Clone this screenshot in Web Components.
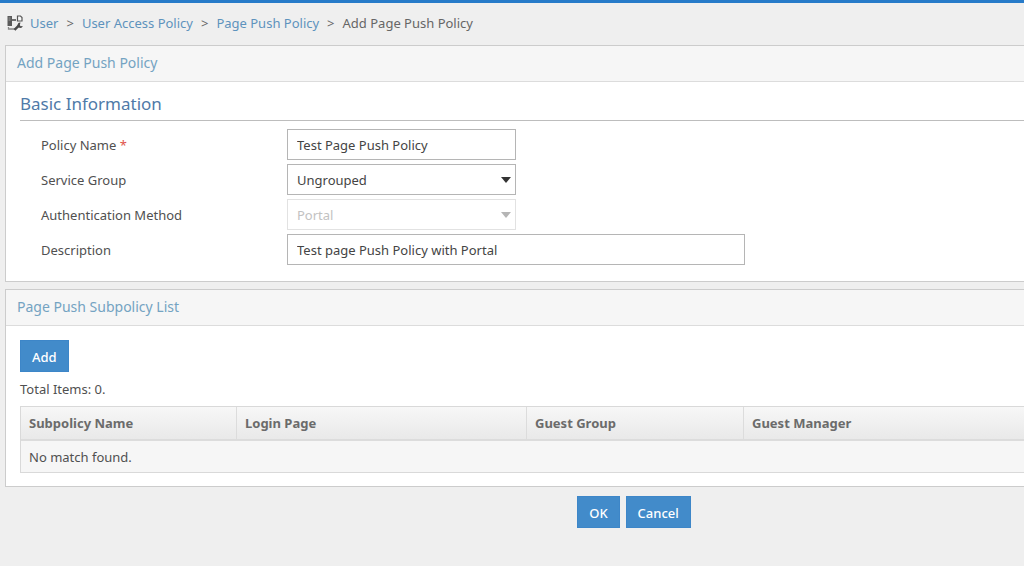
<!DOCTYPE html>
<html lang="en">
<head>
<meta charset="utf-8">
<title>Add Page Push Policy</title>
<style>
  body { margin: 0; background: #efefef; overflow-x: hidden; }
</style>
</head>
<body>
<policy-page></policy-page>

<template id="policy-page">
  <style>
    :host { display: block; min-height: 100vh; box-sizing: border-box; border-top: 3px solid #277bc9;
      background: #efefef; color: #505050; font: 13px/20px "Noto Sans", "Open Sans", sans-serif; }
    main { display: flex; flex-direction: column; gap: 7px; padding-left: 5px; }
    h2 { margin: 0; padding: 0 0 4px; border-bottom: 1px solid #bdbdbd; color: #4f7aa8;
      font-size: 17px; line-height: 24px; font-weight: 400; }
    form { display: flex; flex-direction: column; gap: 4px; padding: 8px 0 0 21px; }
    .info { padding: 10px 0 16px 14px; }
    .list { padding: 14px 0 13px 14px; }
    .total { margin: 0; padding: 7px 0; }
    footer { display: flex; justify-content: center; gap: 6px; padding: 9px 0 0 244px; }
  </style>
  <crumb-bar></crumb-bar>
  <main>
    <app-panel>
      <span slot="title">Add Page Push Policy</span>
      <div class="info">
        <h2>Basic Information</h2>
        <form>
          <text-field label="Policy Name" value="Test Page Push Policy" required></text-field>
          <select-field label="Service Group" value="Ungrouped"></select-field>
          <select-field label="Authentication Method" value="Portal" disabled></select-field>
          <text-field label="Description" value="Test page Push Policy with Portal" wide></text-field>
        </form>
      </div>
    </app-panel>
    <app-panel>
      <span slot="title">Page Push Subpolicy List</span>
      <div class="list">
        <action-button>Add</action-button>
        <p class="total">Total Items: 0.</p>
        <subpolicy-table></subpolicy-table>
      </div>
    </app-panel>
  </main>
  <footer>
    <action-button>OK</action-button>
    <action-button>Cancel</action-button>
  </footer>
</template>

<template id="crumb-bar">
  <style>
    :host { display: block; padding: 10px 7px 12px; }
    nav, ol { display: flex; align-items: center; }
    nav { gap: 7px; }
    ol { margin: 0; padding: 0; list-style: none; color: #666; }
    li + li::before { content: ">"; padding: 0 8px; color: #666; }
    a { color: #5e93bd; text-decoration: none; }
    svg { display: block; flex: none; }
  </style>
  <nav aria-label="Breadcrumb">
    <svg width="16" height="16" viewBox="0 0 16 16" aria-hidden="true">
      <path d="M.5 1H5v10H.5z" fill="#5a5a5a"/>
      <path d="M1.500 3h2M1.500 5h2" stroke="#999" fill="none"/>
      <path d="M5 5h4" stroke="#444" stroke-width="1.500" fill="none"/>
      <path d="M1.500 12v2H8" stroke="#888" stroke-width="1.300" fill="none"/>
      <path d="M10.500 1h3L15 2.500V6h-4.500z" fill="#f8f8f8" stroke="#555" stroke-width="1.200"/>
      <path d="M7.500 14.800l4.500-4.500" stroke="#4a4a4a" stroke-width="2.400" fill="none"/>
      <path d="M13.500 7.500a2.700 2.700 0 1 0 2.300 3.500l-2.200.3-.8-1.300z" fill="#4a4a4a"/>
    </svg>
    <ol>
      <li><a href="#user">User</a></li>
      <li><a href="#access">User Access Policy</a></li>
      <li><a href="#push">Page Push Policy</a></li>
      <li aria-current="page">Add Page Push Policy</li>
    </ol>
  </nav>
</template>

<template id="app-panel">
  <style>
    :host { display: block; border: 1px solid #ccc; border-right: 0; background: #fff; }
    header { padding: 7px 11px 8px; background: #f6f6f6; border-bottom: 1px solid #dcdcdc;
      color: #74a3c2; font-size: 14px; line-height: 20px; }
  </style>
  <header><slot name="title"></slot></header>
  <slot></slot>
</template>

<template id="text-field">
  <style>
    :host { display: flex; align-items: center; }
    label { flex: 0 0 246px; }
    .star { color: #e0524a; }
    input { box-sizing: border-box; width: 229px; height: 31px; margin: 0; padding: 0 9px; border: 1px solid #b5b5b5;
      border-radius: 0; background: #fff; color: #444; font: inherit; }
    :host([wide]) input { width: 458px; }
  </style>
  <label for="control"></label>
  <input id="control" type="text">
</template>

<template id="select-field">
  <style>
    :host { display: flex; align-items: center; }
    label { flex: 0 0 246px; }
    .box { display: grid; width: 229px; align-items: center; }
    select, svg { grid-area: 1 / 1; }
    select { box-sizing: border-box; width: 100%; height: 31px; margin: 0; padding: 0 9px; border: 1px solid #b5b5b5;
      border-radius: 0; appearance: none; background: #fff; color: #444; font: inherit; opacity: 1; }
    svg { justify-self: end; margin-right: 5px; color: #333; pointer-events: none; z-index: 1; }
    select:disabled { border-color: #e2e2e2; color: #c2c2c2; }
    select:disabled + svg { color: #b5b5b5; }
  </style>
  <label for="control"></label>
  <div class="box">
    <select id="control"></select>
    <svg width="10" height="6" viewBox="0 0 10 6" aria-hidden="true"><path d="M0 0h10L5 6z" fill="currentColor"/></svg>
  </div>
</template>

<template id="action-button">
  <style>
    :host { display: block; }
    button { display: block; height: 32px; margin: 0; padding: 2px 11px 0; border: 1px solid #3d86c8; border-radius: 0;
      background: #428bca; color: #fff; font: inherit; font-weight: 500; cursor: pointer; }
  </style>
  <button type="button"><slot></slot></button>
</template>

<template id="subpolicy-table">
  <style>
    :host { display: block; }
    table { width: 100%; table-layout: fixed; border-spacing: 0; border: 1px solid #d9d9d9; border-right: 0; }
    th { height: 32px; padding: 0 8px; text-align: left; color: #6b6b6b; font-weight: 700;
      background: linear-gradient(#f7f7f7, #e9e9e9); border-bottom: 2px solid #dcdcdc; }
    th + th { border-left: 1px solid #dcdcdc; }
    td { height: 31px; padding: 0 8px; background: #f6f6f6; }
    .name { width: 199px; }
    .login { width: 273px; }
    .group { width: 200px; }
  </style>
  <table>
    <thead>
      <tr><th class="name" scope="col">Subpolicy Name</th><th class="login" scope="col">Login Page</th><th class="group" scope="col">Guest Group</th><th scope="col">Guest Manager</th></tr>
    </thead>
    <tbody><tr><td colspan="4">No match found.</td></tr></tbody>
  </table>
</template>

<script>
  class TemplateElement extends HTMLElement {
    constructor() {
      super();
      this.attachShadow({ mode: "open" })
        .append(document.getElementById(this.localName).content.cloneNode(true));
    }
  }

  class TextField extends TemplateElement {
    connectedCallback() {
      const label = this.shadowRoot.querySelector("label");
      const input = this.shadowRoot.querySelector("input");
      label.textContent = this.getAttribute("label");
      input.value = this.getAttribute("value");
      if (this.hasAttribute("required")) {
        const star = document.createElement("span");
        star.className = "star";
        star.textContent = "*";
        label.append(" ", star);
        input.required = true;
      }
    }
  }

  class SelectField extends TemplateElement {
    connectedCallback() {
      const select = this.shadowRoot.querySelector("select");
      this.shadowRoot.querySelector("label").textContent = this.getAttribute("label");
      select.replaceChildren(new Option(this.getAttribute("value")));
      select.disabled = this.hasAttribute("disabled");
    }
  }

  customElements.define("crumb-bar", class extends TemplateElement {});
  customElements.define("app-panel", class extends TemplateElement {});
  customElements.define("text-field", TextField);
  customElements.define("select-field", SelectField);
  customElements.define("action-button", class extends TemplateElement {});
  customElements.define("subpolicy-table", class extends TemplateElement {});
  customElements.define("policy-page", class extends TemplateElement {});
</script>
</body>
</html>
